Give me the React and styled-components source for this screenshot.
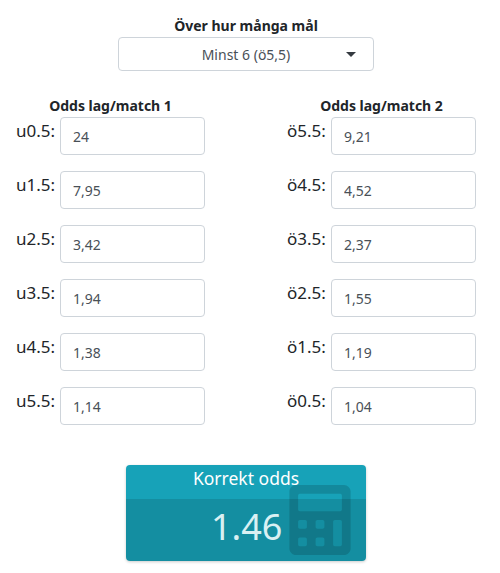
import styled, { createGlobalStyle } from "styled-components"
import { FaCalculator } from "react-icons/fa"

const under = [["u0.5:", "24"], ["u1.5:", "7,95"], ["u2.5:", "3,42"], ["u3.5:", "1,94"], ["u4.5:", "1,38"], ["u5.5:", "1,14"]]
const over = [["ö5.5:", "9,21"], ["ö4.5:", "4,52"], ["ö3.5:", "2,37"], ["ö2.5:", "1,55"], ["ö1.5:", "1,19"], ["ö0.5:", "1,04"]]

function OddsColumn({ title, rows }) {
    return (
        <Column>
            <ColumnTitle>{title}</ColumnTitle>
            {rows.map(([label, value]) => (
                <Row key={label}>
                    <RowLabel>{label}</RowLabel>
                    <OddsInput defaultValue={value} />
                </Row>
            ))}
        </Column>
    )
}

export default function App() {
    return (
        <Page>
            <GlobalStyle />
            <GoalPicker>
                <PickerTitle>Över hur många mål</PickerTitle>
                <Select>
                    <SelectText>Minst 6 (ö5,5)</SelectText>
                    <Caret />
                </Select>
            </GoalPicker>
            <Columns>
                <OddsColumn title="Odds lag/match 1" rows={under} />
                <OddsColumn title="Odds lag/match 2" rows={over} />
            </Columns>
            <ResultBox>
                <ResultHeader>Korrekt odds</ResultHeader>
                <ResultBody>1.46</ResultBody>
                <ResultIcon><FaCalculator /></ResultIcon>
            </ResultBox>
        </Page>
    )
}

const GlobalStyle = createGlobalStyle`
    * {
        box-sizing: border-box;
    }
    body {
        margin: 0;
        background-color: #fff;
        font-family: "Noto Sans", "Liberation Sans", sans-serif;
        color: #212529;
    }
`

const Page = styled.div`
    display: flex;
    flex-direction: column;
    align-items: center;
    width: 500px;
    height: 573px;
    padding-top: 16px;
`

const GoalPicker = styled.div`
    display: flex;
    flex-direction: column;
    align-items: center;
    width: 256px;
    margin-right: 8px;
`

const PickerTitle = styled.div`
    font-size: 14px;
    line-height: 19px;
    margin-bottom: 2px;
    font-weight: 700;
    white-space: nowrap;
`

const Select = styled.div`
    position: relative;
    display: flex;
    justify-content: center;
    align-items: center;
    width: 100%;
    height: 34px;
    border: 1px solid #ced4da;
    border-radius: 4px;
`

const SelectText = styled.span`
    font-size: 14px;
    color: #495057;
`

const Caret = styled.span`
    position: absolute;
    right: 17px;
    top: 14px;
    border-top: 5px solid #343a40;
    border-left: 5px solid transparent;
    border-right: 5px solid transparent;
`

const Columns = styled.div`
    display: grid;
    grid-template-columns: 189px 189px;
    column-gap: 82px;
    margin-top: 25px;
    margin-right: 8px;
`

const Column = styled.div`
    display: flex;
    flex-direction: column;
`

const ColumnTitle = styled.div`
    font-size: 14px;
    line-height: 19px;
    margin-bottom: 2px;
    font-weight: 700;
    text-align: center;
    white-space: nowrap;
`

const Row = styled.div`
    display: flex;
    justify-content: space-between;
    height: 38px;
    margin-bottom: 16px;
`

const RowLabel = styled.label`
    font-size: 17px;
    line-height: 28px;
    white-space: nowrap;
`

const OddsInput = styled.input`
    width: 145px;
    height: 38px;
    border: 1px solid #ced4da;
    border-radius: 4px;
    padding: 0 12px;
    font-family: "Noto Sans", "Liberation Sans", sans-serif;
    font-size: 14px;
    color: #495057;
    background-color: #fff;
    outline: none;
`

const ResultBox = styled.div`
    position: relative;
    display: flex;
    flex-direction: column;
    width: 240px;
    height: 96px;
    margin-top: 24px;
    margin-right: 8px;
    border-radius: 4px;
    overflow: hidden;
    color: #fff;
    box-shadow: 0 1px 3px rgba(0, 0, 0, 0.2);
`

const ResultHeader = styled.div`
    height: 34px;
    background-color: #17a2b8;
    font-size: 17.5px;
    line-height: 27px;
    text-align: center;
`

const ResultBody = styled.div`
    flex: 1;
    background-color: #148ea1;
    font-size: 36px;
    line-height: 56px;
    padding-left: 85px;
    color: #d9f0f3;
`

const ResultIcon = styled.div`
    position: absolute;
    left: 159px;
    top: 20px;
    font-size: 70px;
    line-height: 0;
    color: rgba(0, 0, 0, 0.15);
`
